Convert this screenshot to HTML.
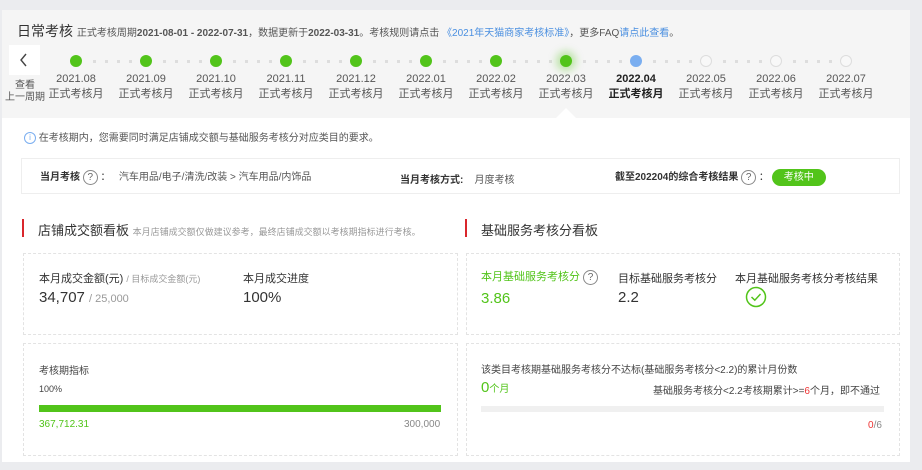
<!DOCTYPE html>
<html><head><meta charset="utf-8"><style>
*{margin:0;padding:0;box-sizing:border-box}
body{width:922px;height:470px;background:#ebecef;font-family:"Liberation Sans","Noto Sans CJK SC",sans-serif;color:#333;position:relative;overflow:hidden}
.a{position:absolute;white-space:nowrap}
.card{position:absolute;left:2px;top:10px;width:908px;height:452px;background:#fff}
.top{position:absolute;left:2px;top:10px;width:908px;height:108px;background:#f5f5f5}
.dot{position:absolute;width:12px;height:12px;border-radius:50%;top:55px}
.g{background:#52c41a}.b{background:#7aaef0}.e{border:1px solid #ddd;background:#f8f8f8}
.sm{position:absolute;width:3px;height:3px;background:#ddd;top:60px}
.lab{position:absolute;width:70px;text-align:center;font-size:11px;color:#555;line-height:15px}
.box{position:absolute;border:1px dashed #e3e3e3}
.q{display:inline-block;width:15px;height:15px;border:1px solid #888;border-radius:50%;font-size:10px;text-align:center;line-height:13px;color:#666;vertical-align:middle}
</style></head><body>
<div class="card"></div>
<div class="top"></div>
<div class="a" style="left:17px;top:21px;font-size:14px;color:#333">日常考核 <span style="font-size:10px;color:#555">正式考核周期<b>2021-08-01 - 2022-07-31</b>，数据更新于<b>2022-03-31</b>。考核规则请点击 <span style="color:#4a8fe0">《2021年天猫商家考核标准》</span>，更多FAQ<span style="color:#4a8fe0">请点此查看</span>。</span></div>
<div class="a" style="left:9px;top:45px;width:31px;height:30px;background:#fff"></div>
<svg class="a" style="left:18px;top:52px" width="12" height="16" viewBox="0 0 12 16"><path d="M8 2 L3 8 L8 14" fill="none" stroke="#444" stroke-width="1.4"/></svg>
<div class="a" style="left:5px;top:80px;width:40px;text-align:center;font-size:10px;color:#555;line-height:12px">查看<br>上一周期</div>
<div id="tl"></div>
<script>
var h='',m=['2021.08','2021.09','2021.10','2021.11','2021.12','2022.01','2022.02','2022.03','2022.04','2022.05','2022.06','2022.07'];
for(var i=0;i<12;i++){var x=76+70*i;var c=i<8?'g':(i==8?'b':'e');
h+='<div class="dot '+c+'" style="left:'+(x-6)+'px'+(i==7?';box-shadow:0 0 8px 4px rgba(82,196,26,.35)':'')+'"></div>';
h+='<div class="lab" style="left:'+(x-35)+'px;top:72px'+(i==8?';font-weight:bold;color:#222':'')+'">'+m[i]+'<br>正式考核月</div>';
if(i<11)for(var k=0;k<4;k++)h+='<div class="sm" style="left:'+(x+17+k*12)+'px"></div>';}
document.getElementById('tl').innerHTML=h;
</script>
<div class="a" style="left:556px;top:108px;width:0;height:0;border-left:10px solid transparent;border-right:10px solid transparent;border-bottom:10px solid #fff"></div>
<div class="a" style="left:24px;top:129px;font-size:10px;color:#555"><span class="q" style="width:12px;height:12px;line-height:10px;font-size:8px;border-color:#7aaef0;color:#7aaef0">i</span> 在考核期内，您需要同时满足店铺成交额与基础服务考核分对应类目的要求。</div>
<div class="box" style="left:21px;top:158px;width:879px;height:36px;border:1px solid #eee"></div>
<div class="a" style="left:40px;top:168px;font-size:10px"><b>当月考核</b> <span class="q">?</span> ：&nbsp;&nbsp; <span style="color:#555">汽车用品/电子/清洗/改装 &gt; 汽车用品/内饰品</span></div>
<div class="a" style="left:400px;top:171px;font-size:10px"><b>当月考核方式:</b>&nbsp;&nbsp;&nbsp; <span style="color:#555">月度考核</span></div>
<div class="a" style="left:615px;top:168px;font-size:10px"><b>截至202204的综合考核结果</b> <span class="q">?</span> ： <span style="display:inline-block;background:#52c41a;color:#fff;border-radius:9px;width:54px;height:17px;line-height:17px;text-align:center;font-size:10px;vertical-align:middle">考核中</span></div>
<div class="a" style="left:22px;top:219px;width:2px;height:18px;background:#d9262c"></div>
<div class="a" style="left:38px;top:220px;font-size:13px;color:#333">店铺成交额看板 <span style="font-size:9px;color:#999">本月店铺成交额仅做建议参考，最终店铺成交额以考核期指标进行考核。</span></div>
<div class="a" style="left:465px;top:219px;width:2px;height:18px;background:#d9262c"></div>
<div class="a" style="left:481px;top:220px;font-size:13px">基础服务考核分看板</div>
<div class="box" style="left:23px;top:253px;width:435px;height:82px"></div>
<div class="box" style="left:466px;top:253px;width:434px;height:82px"></div>
<div class="box" style="left:23px;top:343px;width:435px;height:113px"></div>
<div class="box" style="left:466px;top:343px;width:434px;height:113px"></div>
<div class="a" style="left:39px;top:270px;font-size:11px">本月成交金额(元) <span style="font-size:9px;color:#999">/ 目标成交金额(元)</span></div>
<div class="a" style="left:39px;top:289px;font-size:15px;color:#333">34,707 <span style="font-size:11px;color:#999">/ 25,000</span></div>
<div class="a" style="left:243px;top:270px;font-size:11px">本月成交进度</div>
<div class="a" style="left:243px;top:289px;font-size:15px">100%</div>
<div class="a" style="left:481px;top:268px;font-size:11px;color:#52c41a">本月基础服务考核分 <span class="q">?</span></div>
<div class="a" style="left:481px;top:290px;font-size:15px;color:#52c41a">3.86</div>
<div class="a" style="left:618px;top:270px;font-size:11px">目标基础服务考核分</div>
<div class="a" style="left:618px;top:289px;font-size:15px">2.2</div>
<div class="a" style="left:735px;top:270px;font-size:11px">本月基础服务考核分考核结果</div>
<svg class="a" style="left:745px;top:286px" width="22" height="22" viewBox="0 0 22 22"><circle cx="11" cy="11" r="9.5" fill="none" stroke="#52c41a" stroke-width="1.5"/><path d="M6.5 11 L9.8 14.2 L15.5 8" fill="none" stroke="#52c41a" stroke-width="1.5"/></svg>
<div class="a" style="left:39px;top:362px;font-size:10px;color:#444">考核期指标</div>
<div class="a" style="left:39px;top:384px;font-size:9px;color:#444">100%</div>
<div class="a" style="left:39px;top:405px;width:402px;height:7px;background:#52c41a"></div>
<div class="a" style="left:39px;top:419px;font-size:10px;color:#52c41a">367,712.31</div>
<div class="a" style="left:404px;top:419px;font-size:10px;color:#888">300,000</div>
<div class="a" style="left:481px;top:361px;font-size:10px;color:#444">该类目考核期基础服务考核分不达标(基础服务考核分&lt;2.2)的累计月份数</div>
<div class="a" style="left:481px;top:379px;font-size:15px;color:#52c41a">0<span style="font-size:10px">个月</span></div>
<div class="a" style="left:653px;top:382px;font-size:10px;color:#444">基础服务考核分&lt;2.2考核期累计&gt;=<span style="color:#e33">6</span>个月，即不通过</div>
<div class="a" style="left:481px;top:406px;width:403px;height:6px;background:#f0f0f0"></div>
<div class="a" style="left:868px;top:420px;font-size:10px;color:#888"><span style="color:#e33">0</span>/6</div>
</body></html>
